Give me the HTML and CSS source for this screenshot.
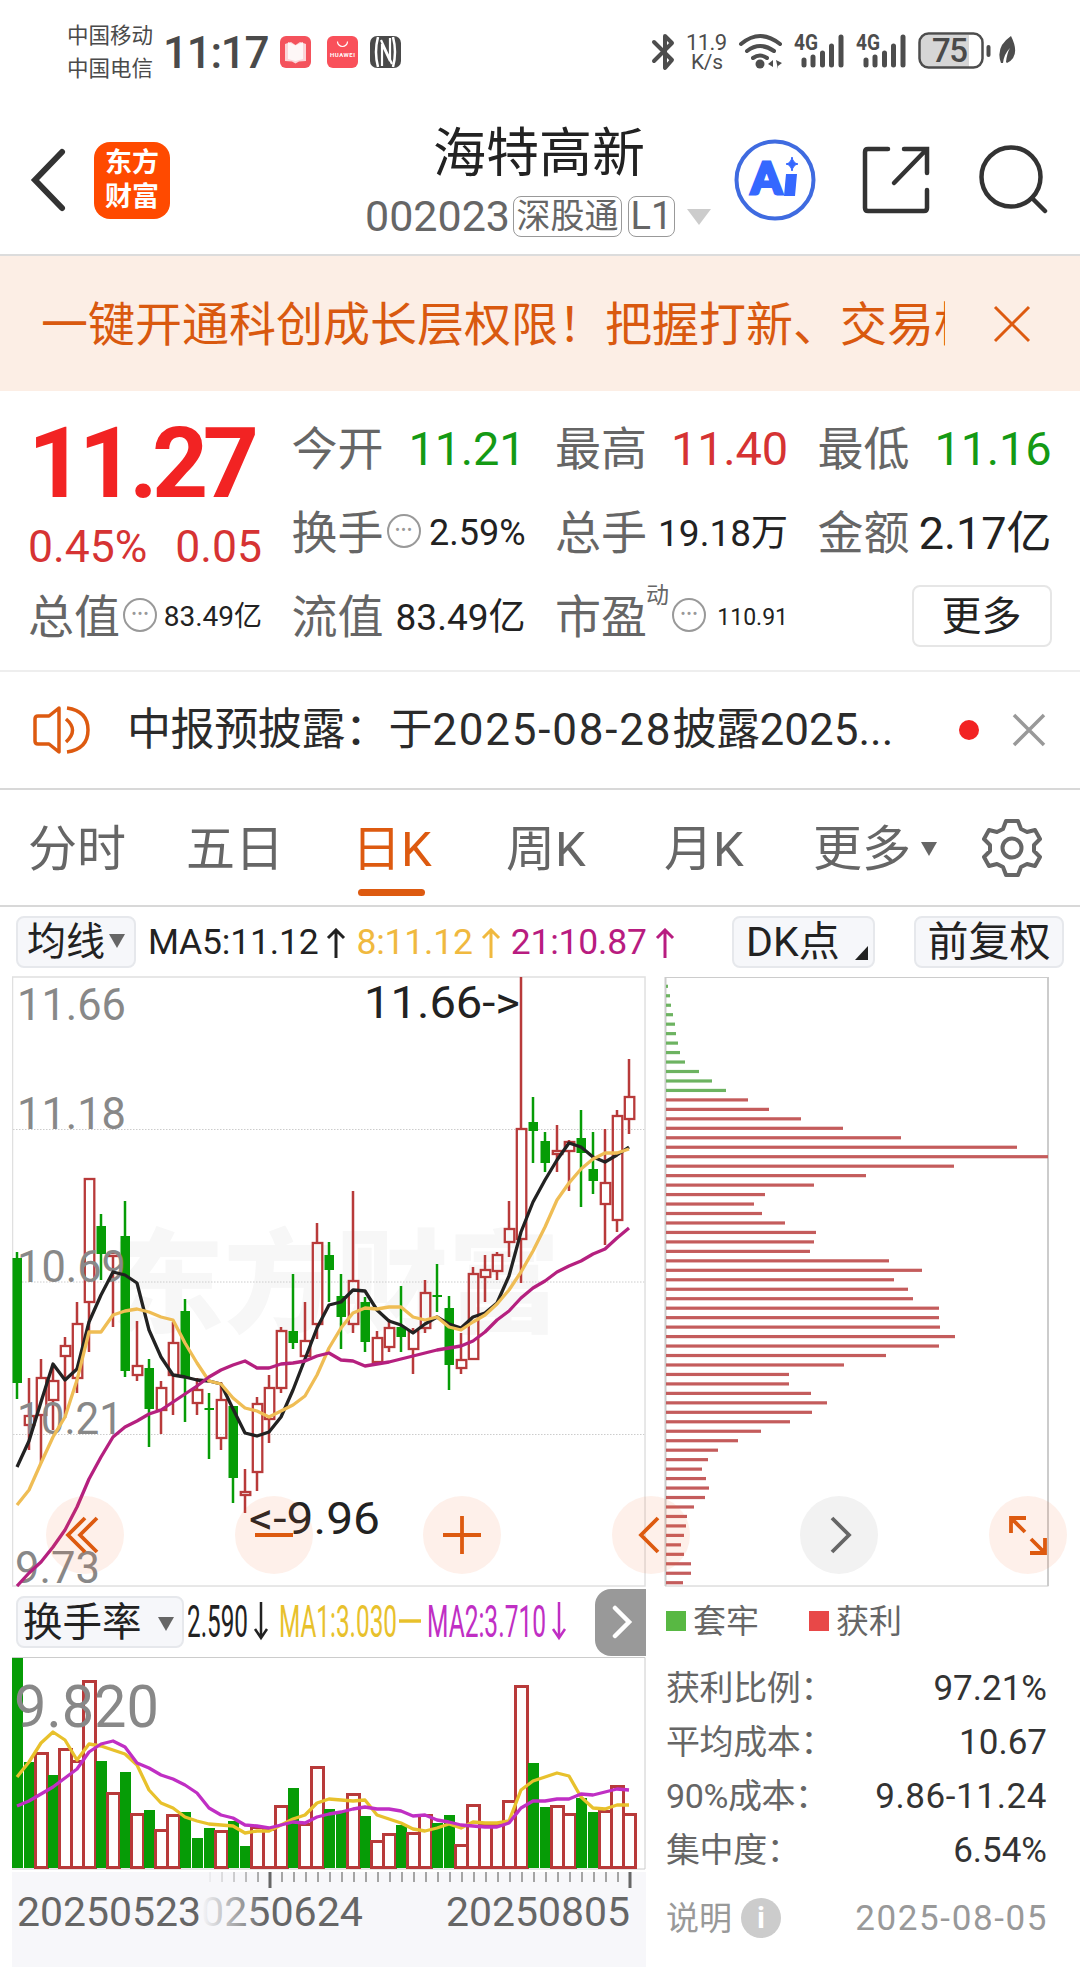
FILE: index.html
```html
<!DOCTYPE html>
<html lang="zh-CN">

<head>
    <meta charset="UTF-8">
    <meta name="viewport" content="width=device-width, initial-scale=1.0">
    <title>海特高新 002023</title>
    <link rel="stylesheet" href="styles.css">
</head>

<body>
    <!-- 系统状态栏 -->
    <div class="status">
        <div class="carrier">
            <div>中国移动</div>
            <div>中国电信</div>
        </div>
        <div class="clock">11:17</div>
        <svg class="tray" width="122" height="32" viewBox="0 0 122 32">
            <rect x="0" y="0" width="31" height="32" rx="6" fill="#f4525c" />
            <path d="M5 8l6-2 4.500 3 4.500-3 6 2v17l-7 .5-3.500 2-3.500-2-7-.5z" fill="#fbd5d8" />
            <path d="M8 6l7.500 3.500L23 6v17l-7.500 2L8 23z" fill="#fff" opacity=".8" />
            <rect x="47" y="0" width="31" height="32" rx="6" fill="#f9505a" />
            <path d="M57.500 5.500a5 5 0 0 0 10 0" fill="none" stroke="#fff" stroke-width="1.200" />
            <text x="50" y="21" font-size="6" font-weight="700" fill="#fff" textLength="25">HUAWEI</text>
            <rect x="90" y="0" width="31" height="32" rx="7" fill="#4a4a4a" />
            <path d="M98 1q-4 15 0 30M113 31q4-15 0-30" fill="none" stroke="#fff" stroke-width="2.500" />
            <path d="M102 30V8l8 17V2M101 4l11 24" fill="none" stroke="#fff" stroke-width="2.200" />
        </svg>
        <svg class="signals" width="368" height="42" viewBox="650 32 368 42">
            <g fill="none" stroke="#4d4d4d" stroke-width="4" stroke-linecap="round" stroke-linejoin="round">
                <path d="M655 43l18 18-7 8V37l7 7-18 18" />
                <path d="M742 45q19-16 39 0M748 52q13-10 27 0M754 59q7-5 14 0" />
            </g>
            <circle cx="761" cy="65" r="4.500" fill="#4d4d4d" />
            <path d="M774 61v7l-5-3zM777 61l6 3-4 3v3z" fill="#4d4d4d" />
            <g fill="#4d4d4d">
                <text x="687" y="51" font-size="22" textLength="41">11.9</text>
                <text x="692" y="70" font-size="21" textLength="32">K/s</text>
                <text x="795" y="51" font-size="22" font-weight="700" textLength="24" lengthAdjust="spacingAndGlyphs">4G</text>
                <text x="857" y="51" font-size="22" font-weight="700" textLength="24" lengthAdjust="spacingAndGlyphs">4G</text>
            </g>
            <path d="M805 61v5M814 58v8M823.500 54v12M832.500 47v19M842 38v28M867 61v5M876 58v8M885.500 54v12M894.500 47v19M904 38v28"
                stroke="#4d4d4d" stroke-width="5" stroke-linecap="round" />
            <path d="M928 36h42v32h-42q-7 0-7-8V44q0-8 7-8z" fill="#d6d6d6" />
            <rect x="920.500" y="34.500" width="63" height="34" rx="9" fill="none" stroke="#4d4d4d" stroke-width="2.500" />
            <path d="M989.500 48v8" stroke="#4d4d4d" stroke-width="4" stroke-linecap="round" />
            <text x="933" y="63" font-size="33" font-weight="500" fill="#4a4a4a" textLength="36">75</text>
            <path d="M1002 64q-6-16 10-27q10 20-4 27l-1-1q1-9 4-14q-6 6-7 15z" fill="#4d4d4d" />
        </svg>
    </div>

    <!-- 标题栏 -->
    <div class="header">
        <svg class="back" width="38" height="66" viewBox="0 0 38 66">
            <path d="M33 5L6 33l27 28" fill="none" stroke="#333" stroke-width="6" stroke-linecap="round" />
        </svg>
        <div class="applogo"><span>东方</span><span>财富</span></div>
        <div class="stock">
            <div class="name">海特高新</div>
            <div class="code">
                <span>002023</span>
                <i class="tag">深股通</i>
                <i class="tag">L1</i>
                <b class="arrow"></b>
            </div>
        </div>
        <svg class="ai" width="82" height="82" viewBox="0 0 82 82">
            <circle cx="41" cy="41" r="38.500" fill="none" stroke="#3f6be0" stroke-width="4" />
            <text x="17" y="55" font-family="Lato" font-size="44" font-weight="900" fill="#3568ff" stroke="#3568ff"
                stroke-width="3">A</text>
            <path d="M52 35h11l-2 22h-11z" fill="#3568ff" />
            <path d="M58 18q1 6 6 7q-5 1-6 7q-1-6-6-7q5-1 6-7z" fill="#3568ff" stroke="#3568ff" />
        </svg>
        <svg class="share" width="68" height="68" viewBox="0 0 68 68">
            <path d="M26 3H6q-3 0-3 3v56q0 3 3 3h56q3 0 3-3V44M42 3h23v24M64 4L32 37" fill="none" stroke="#333"
                stroke-width="4.500" stroke-linecap="round" />
        </svg>
        <svg class="search" width="70" height="70" viewBox="0 0 70 70">
            <circle cx="33" cy="32" r="29.500" fill="none" stroke="#333" stroke-width="4.500" />
            <path d="M54 53l13 13" stroke="#333" stroke-width="4.500" stroke-linecap="round" />
        </svg>
    </div>

    <!-- 广告条 -->
    <div class="banner">
        <div class="bannertext">一键开通科创成长层权限！把握打新、交易机会</div>
        <svg width="38" height="38" viewBox="0 0 38 38">
            <path d="M2 2l34 34M36 2L2 36" stroke="#dd5a10" stroke-width="3" />
        </svg>
    </div>

    <!-- 行情数据 -->
    <div class="quote">
        <div class="now">
            <div class="price">11.27</div>
            <div class="change"><span>0.45%</span><span>0.05</span></div>
        </div>
        <div class="item"><label>今开</label><span class="big green">11.21</span></div>
        <div class="item"><label>最高</label><span class="big red">11.40</span></div>
        <div class="item"><label>最低</label><span class="big green">11.16</span></div>
        <div class="item"><label>换手</label><i class="dots">•••</i><span class="v36">2.59%</span></div>
        <div class="item"><label>总手</label><span class="v37">19.18万</span></div>
        <div class="item"><label>金额</label><span class="v44">2.17亿</span></div>
        <div class="item"><label>总值</label><i class="dots">•••</i><span class="v28">83.49亿</span></div>
        <div class="item"><label>流值</label><span class="v37">83.49亿</span></div>
        <div class="item"><label>市盈<sup>动</sup></label><i class="dots">•••</i><span class="v23">110.91</span></div>
        <div class="item end"><div class="morebtn">更多</div></div>
    </div>

    <!-- 公告 -->
    <div class="notice">
        <svg width="60" height="50" viewBox="0 0 60 50">
            <g fill="none" stroke="#dd5a10" stroke-width="3.500" stroke-linejoin="round">
                <path d="M27 3L17 11H6q-3 0-3 3v22q0 3 3 3h11l10 8z" />
                <path d="M34 14q13 11 0 23M35 3q21 3 21 22t-21 22" />
            </g>
        </svg>
        <div class="noticetext">中报预披露：<span>于</span><span class="num">2025-08-28</span>披露<span class="num2">2025...</span></div>
        <div class="reddot"></div>
        <svg width="36" height="36" viewBox="0 0 36 36">
            <path d="M3 3l30 30M33 3L3 33" stroke="#999" stroke-width="3.500" />
        </svg>
    </div>

    <!-- 周期切换 -->
    <div class="tabs">
        <span>分时</span>
        <span>五日</span>
        <span class="active">日K</span>
        <span>周K</span>
        <span>月K</span>
        <span>更多<b class="tri"></b></span>
        <svg width="60" height="60" viewBox="0 0 60 60">
            <g fill="none" stroke="#666" stroke-width="4" stroke-linejoin="round">
                <path d="M24 3h12l3 8 6 3 8-2 5 9-6 6v6l6 6-5 9-8-2-6 3-3 8H24l-3-8-6-3-8 2-5-9 6-6v-6l-6-6 5-9 8 2 6-3z" />
                <circle cx="30" cy="30" r="9.500" />
            </g>
        </svg>
    </div>

    <!-- 均线工具栏 -->
    <div class="tools">
        <div class="chip ma">均线<b class="tri"></b></div>
        <div class="mavals">
            <span>MA5:11.12</span><svg width="20" height="30" viewBox="0 0 20 30"><path d="M10 30V2M2 10l8-8 8 8" /></svg>
            <span class="y">8:11.12</span><svg class="y" width="20" height="30" viewBox="0 0 20 30"><path d="M10 30V2M2 10l8-8 8 8" /></svg>
            <span class="m">21:10.87</span><svg class="m" width="20" height="30" viewBox="0 0 20 30"><path d="M10 30V2M2 10l8-8 8 8" /></svg>
        </div>
        <div class="chip dk">DK点<b class="corner"></b></div>
        <div class="chip fq">前复权</div>
    </div>

    <!-- 图表区 -->
    <div class="charts">
        <div class="left">
            <svg id="kline" width="634" height="611" viewBox="12 976 634 611"></svg>
            <div class="indicator">
                <div class="chip hs">换手率<b class="tri"></b></div>
                <svg class="turn" width="382" height="52" viewBox="188 1596 382 52">
                    <g font-size="45">
                        <text x="187" y="1637" fill="#222" textLength="61" lengthAdjust="spacingAndGlyphs">2.590</text>
                        <text x="279" y="1637" fill="#e8c12c" textLength="118" lengthAdjust="spacingAndGlyphs">MA1:3.030</text>
                        <text x="427" y="1637" fill="#c02fc4" textLength="119" lengthAdjust="spacingAndGlyphs">MA2:3.710</text>
                    </g>
                    <path d="M261 1602v35M255 1629l6 9 6-9" fill="none" stroke="#222" stroke-width="2.500" />
                    <path d="M399 1621h22" fill="none" stroke="#e8c12c" stroke-width="3.500" />
                    <path d="M559 1602v35M553 1629l6 9 6-9" fill="none" stroke="#c02fc4" stroke-width="2.500" />
                </svg>
                <div class="next">
                    <svg width="24" height="34" viewBox="0 0 24 34"><path d="M6 3l14 14L6 31" fill="none" stroke="#fff" stroke-width="4.500" stroke-linecap="round" /></svg>
                </div>
            </div>
            <svg id="volume" width="634" height="213" viewBox="12 1657 634 213"></svg>
            <svg id="axis" width="634" height="95" viewBox="12 1872 634 95"></svg>
        </div>
        <div class="right">
            <svg id="cost" width="386" height="611" viewBox="664 976 386 611"></svg>
            <div class="legend">
                <b class="sq g"></b><span>套牢</span>
                <b class="sq r"></b><span>获利</span>
            </div>
            <div class="row"><label>获利比例：</label><span>97.21%</span></div>
            <div class="row"><label>平均成本：</label><span>10.67</span></div>
            <div class="row"><label>90%成本：</label><span class="range">9.86-11.24</span></div>
            <div class="row"><label>集中度：</label><span>6.54%</span></div>
            <div class="foot"><label>说明</label><i>i</i><span>2025-08-05</span></div>
        </div>
        <!-- 悬浮操作按钮 -->
        <div class="floats">
            <div class="fbtn"><svg viewBox="0 0 78 78"><path d="M39 22L22 39l17 17M51 22L34 39l17 17" /></svg></div>
            <div class="fbtn"><svg viewBox="0 0 78 78"><path d="M20 39h38" /></svg></div>
            <div class="fbtn"><svg viewBox="0 0 78 78"><path d="M20 39h38M39 20v38" /></svg></div>
            <div class="fbtn"><svg viewBox="0 0 78 78"><path d="M46 22L29 39l17 17" /></svg></div>
            <div class="fbtn grey"><svg viewBox="0 0 78 78"><path d="M32 22l17 17-17 17" /></svg></div>
            <div class="fbtn"><svg viewBox="0 0 78 78"><path d="M37 22H22v15M22 22l14 14M41 57h15V42M56 57L42 43" /></svg></div>
        </div>
    </div>

    <script src="script.js"></script>
</body>

</html>
```
FILE: styles.css
```css
body {
    margin: 0;
    padding: 0;
    width: 1080px;
    background: #fff;
    color: #222;
    font-family: Roboto, "Noto Sans CJK SC", sans-serif;
    line-height: 1;
    overflow: hidden;
}

* {
    box-sizing: border-box;
}

i {
    font-style: normal;
}

svg {
    display: block;
    flex: none;
}

/* 状态栏 */
.status {
    height: 104px;
    padding: 0 63px 0 67px;
    display: flex;
    align-items: center;
    color: #4a4a4a;
}

.carrier {
    font-size: 21.5px;
    line-height: 33px;
    width: 96px;
}

.clock {
    font-size: 44px;
    font-weight: 500;
    width: 117px;
    padding-top: 2px;
    letter-spacing: -1.3px;
}

.signals {
    margin-left: auto;
}

/* 标题栏 */
.header {
    height: 152px;
    padding-top: 2px;
    display: flex;
    align-items: center;
    border-bottom: 2px solid #dcdcdc;
    position: relative;
}

.back {
    margin-left: 29px;
}

.applogo {
    width: 76px;
    height: 77px;
    margin-left: 27px;
    border-radius: 16px;
    background: #ff4a00;
    color: #fff;
    font-size: 27px;
    font-weight: 700;
    display: flex;
    flex-direction: column;
    align-items: center;
    justify-content: center;
    gap: 7px;
}

.stock {
    width: 346px;
    margin-left: 195px;
    margin-top: 6px;
}

.name {
    font-size: 53px;
    height: 54px;
    padding-left: 68px;
    margin-bottom: 13px;
    white-space: nowrap;
}

.code {
    display: flex;
    align-items: center;
    font-size: 43px;
    color: #666;
    white-space: nowrap;
}

.tag {
    width: 109px;
    height: 41px;
    margin-left: 3px;
    border: 1.5px solid #999;
    border-radius: 8px;
    font-size: 34px;
    line-height: 39px;
    text-align: center;
    flex: none;
}

.tag + .tag {
    width: 47px;
    font-size: 38px;
    line-height: 38px;
    margin-left: 6px;
}

.arrow {
    margin-left: 12px;
    border: 12px solid transparent;
    border-top: 16px solid #ccc;
    border-bottom: 0;
}

.ai {
    margin-left: 23px;
}

.share {
    margin-left: 46px;
}

.search {
    margin-left: 48px;
}

/* 广告条 */
.banner {
    height: 135px;
    padding: 0 49px 0 41px;
    background: #fceee5;
    color: #d9590f;
    display: flex;
    align-items: center;
    justify-content: space-between;
}

.bannertext {
    width: 904px;
    font-size: 47px;
    line-height: 60px;
    padding-top: 2px;
    white-space: nowrap;
    overflow: hidden;
}

/* 行情 */
.quote {
    height: 281px;
    padding: 15px 28px 0 28px;
    display: grid;
    grid-template-columns: 234px 234px 233px 234px;
    grid-template-rows: 84px 84px 84px;
    column-gap: 29.5px;
    border-bottom: 2px solid #eee;
}

.now {
    grid-row: span 2;
}

.price {
    margin-top: 9px;
    font-size: 98px;
    font-weight: 700;
    letter-spacing: -5.6px;
    color: #f22323;
}

.change {
    margin-top: 12px;
    display: flex;
    justify-content: space-between;
    font-size: 44.5px;
    color: #d63333;
}

.item {
    display: flex;
    align-items: center;
    justify-content: space-between;
    white-space: nowrap;
}

.item label {
    font-size: 46px;
    color: #666;
    position: relative;
    top: 1px;
}

.item sup {
    position: absolute;
    left: 91px;
    top: -10px;
    font-size: 23px;
    line-height: 1;
}

.dots {
    width: 34px;
    height: 34px;
    margin-left: 3px;
    margin-right: auto;
    margin-top: -3px;
    border: 2.5px solid #999;
    border-radius: 50%;
    font-size: 15px;
    line-height: 28px;
    letter-spacing: 1px;
    text-indent: 1px;
    text-align: center;
    color: #999;
}

.item label:has(sup) + .dots {
    margin-left: 25px;
}

.big {
    font-size: 47px;
    letter-spacing: -0.2px;
}

.green {
    color: #149a14;
}

.red {
    color: #d63333;
}

.v44 {
    font-size: 45px;
}

.v37 {
    font-size: 37px;
}

.v36 {
    font-size: 36px;
}

.v28 {
    font-size: 28px;
}

.v23 {
    font-size: 23px;
}

.v44,
.v37,
.v36,
.v28,
.v23 {
    padding-top: 2px;
}

.item.end {
    justify-content: flex-end;
}

.morebtn {
    width: 140px;
    height: 62px;
    border: 2px solid #e6e6e6;
    border-radius: 8px;
    font-size: 40px;
    line-height: 59px;
    text-align: center;
}

/* 公告 */
.notice {
    height: 118px;
    padding: 0 33px 0 32px;
    display: flex;
    align-items: center;
    border-bottom: 2px solid #d8d8d8;
    color: #2b2b2b;
}

.noticetext {
    width: 830px;
    margin-left: 35px;
    font-size: 44px;
    white-space: nowrap;
    letter-spacing: -0.4px;
}

.num {
    letter-spacing: 1.8px;
}

.num2 {
    letter-spacing: 0;
}

.reddot {
    width: 20px;
    height: 20px;
    margin-left: 2px;
    margin-right: auto;
    border-radius: 50%;
    background: #f22323;
}

/* 周期 */
.tabs {
    height: 117px;
    padding-left: 28px;
    display: grid;
    grid-template-columns: 158px 166px 154px 158px 149px 169px 60px;
    align-items: center;
    font-size: 49px;
    color: #666;
    white-space: nowrap;
    border-bottom: 2px solid #d8d8d8;
}

.tabs span {
    padding-top: 3px;
}

.tabs .active {
    position: relative;
    color: #dd5a10;
}

.active::after {
    content: "";
    position: absolute;
    left: 6px;
    bottom: -22px;
    width: 67px;
    height: 7px;
    border-radius: 4px;
    background: #dd5a10;
}

.tri {
    display: inline-block;
    border: 8px solid transparent;
    border-top: 14px solid #666;
    border-bottom: 0;
    vertical-align: middle;
}

.tabs .tri {
    margin: -8px 0 0 10px;
}

/* 工具栏 */
.tools {
    height: 69px;
    padding: 0 16px;
    display: flex;
    align-items: center;
}

.chip {
    height: 52px;
    border: 2px solid #e6e8ec;
    border-radius: 8px;
    background: #f6f7fa;
    font-size: 39px;
    line-height: 49px;
    white-space: nowrap;
    flex: none;
}

.ma {
    width: 120px;
    padding-left: 9px;
}

.ma .tri {
    margin: -6px 0 0 4px;
}

.mavals {
    display: flex;
    align-items: center;
    margin-left: 12px;
    width: 584px;
    padding-top: 2px;
    font-size: 35.5px;
    letter-spacing: -0.2px;
}

.mavals svg {
    margin: 0 10px 0 8px;
    fill: none;
    stroke: #222;
    stroke-width: 3;
}

.mavals .y {
    color: #f0b93f;
    stroke: #f0b93f;
}

span.y,
span.m {
    stroke: none;
}

.mavals .m {
    color: #b81c80;
    stroke: #b81c80;
}

.dk {
    position: relative;
    width: 143px;
    padding-left: 12px;
    font-size: 41px;
}

.corner {
    position: absolute;
    right: 5px;
    bottom: 6px;
    border-left: 13px solid transparent;
    border-bottom: 14px solid #222;
}

.fq {
    width: 150px;
    margin-left: 39px;
    text-align: center;
    font-size: 41px;
}

/* 图表 */
.charts {
    position: relative;
    display: flex;
    padding-left: 12px;
}

.left {
    width: 634px;
}

.indicator {
    height: 70px;
    display: flex;
    align-items: center;
}

.hs {
    width: 168px;
    margin-left: 4px;
    padding-left: 5px;
    font-size: 39.5px;
}

.hs .tri {
    margin: -4px 0 0 16px;
}

.turn {
    margin-left: 4px;
}

.next {
    width: 51px;
    height: 67px;
    margin-left: auto;
    border-radius: 16px 0 0 16px;
    background: #999;
    display: flex;
    align-items: center;
    justify-content: center;
}

#axis {
    margin-top: 2px;
    background: #f7f7fa;
}

.right {
    width: 386px;
    margin-left: 18px;
}

.legend {
    height: 68px;
    display: flex;
    align-items: center;
    font-size: 33px;
    color: #666;
}

.sq {
    width: 20px;
    height: 20px;
    margin: 0 7px 0 2px;
    background: #58b843;
}

.sq.r {
    margin-left: 50px;
    background: #e84848;
}

.row {
    height: 54px;
    padding: 0 3px 0 2px;
    display: flex;
    align-items: center;
    justify-content: space-between;
    font-size: 35px;
    color: #333;
}

.legend + .row {
    margin-top: 6px;
}

.row label {
    font-size: 34px;
    letter-spacing: -0.4px;
    color: #666;
}

.range {
    letter-spacing: 0.6px;
}

.foot {
    height: 60px;
    margin-top: 11px;
    padding: 0 2px;
    display: flex;
    align-items: center;
    font-size: 35px;
    color: #999;
}

.foot label {
    font-size: 33px;
}

.foot i {
    width: 40px;
    height: 40px;
    margin-left: 9px;
    border-radius: 50%;
    background: #ccc;
    color: #fff;
    font-size: 30px;
    font-weight: 700;
    line-height: 40px;
    text-align: center;
}

.foot span {
    margin-left: auto;
    letter-spacing: 1.6px;
}

/* 悬浮按钮 */
.floats {
    position: absolute;
    left: 46px;
    top: 520px;
    width: 1021px;
    display: flex;
    justify-content: space-between;
}

.fbtn {
    width: 78px;
    height: 78px;
    border-radius: 50%;
    background: rgba(250, 110, 50, 0.1);
}

.fbtn svg {
    fill: none;
    stroke: #dd5a10;
    stroke-width: 3.8;
}

.fbtn.grey {
    background: #f2f2f2;
}

.grey svg {
    stroke: #666;
}
```
FILE: script.js
```js
const RED = "#b83a3a";
const GREEN = "#069c06";
const STEP = 12;
const X0 = 17;

// K线：颜色, 最高, 实体上, 实体下, 最低
const candles = [
    ["g", 1252, 1258, 1383, 1399], ["r", 1378, 1415, 1425, 1450], ["r", 1359, 1377, 1415, 1463], ["r", 1365, 1380, 1400, 1430],
    ["r", 1337, 1345, 1356, 1418], ["r", 1302, 1323, 1378, 1393], ["r", 1178, 1178, 1302, 1352], ["g", 1214, 1226, 1254, 1280],
    ["r", 1252, 1252, 1256, 1327], ["g", 1201, 1236, 1371, 1377], ["r", 1321, 1365, 1375, 1381], ["g", 1359, 1368, 1409, 1447],
    ["r", 1381, 1387, 1410, 1434], ["r", 1322, 1342, 1375, 1415], ["g", 1299, 1311, 1377, 1422], ["r", 1378, 1389, 1403, 1415],
    ["g", 1393, 1408, 1410, 1459], ["r", 1382, 1399, 1438, 1450], ["g", 1406, 1406, 1478, 1503], ["r", 1469, 1491, 1495, 1513],
    ["r", 1397, 1403, 1472, 1491], ["r", 1375, 1387, 1419, 1443], ["r", 1327, 1330, 1388, 1393], ["g", 1274, 1331, 1343, 1349],
    ["r", 1302, 1340, 1356, 1356], ["r", 1223, 1242, 1324, 1339], ["g", 1242, 1255, 1270, 1302], ["g", 1274, 1296, 1317, 1349],
    ["r", 1191, 1280, 1324, 1333], ["g", 1297, 1302, 1342, 1352], ["r", 1331, 1337, 1362, 1362], ["r", 1319, 1327, 1347, 1352],
    ["g", 1286, 1327, 1337, 1352], ["r", 1328, 1330, 1349, 1374], ["r", 1280, 1292, 1328, 1333], ["g", 1264, 1295, 1297, 1312],
    ["g", 1296, 1308, 1365, 1390], ["r", 1333, 1359, 1368, 1374], ["r", 1267, 1273, 1359, 1359], ["r", 1255, 1269, 1277, 1302],
    ["r", 1252, 1254, 1271, 1280], ["r", 1201, 1228, 1242, 1257], ["r", 977, 1128, 1239, 1283], ["g", 1097, 1122, 1131, 1163],
    ["g", 1132, 1141, 1163, 1172], ["r", 1125, 1150, 1154, 1172], ["r", 1140, 1141, 1151, 1191], ["g", 1110, 1138, 1153, 1207],
    ["g", 1132, 1169, 1181, 1194], ["r", 1129, 1182, 1204, 1245], ["r", 1110, 1115, 1220, 1232], ["r", 1059, 1096, 1119, 1134]
];

const ma5 = [1467, 1441, 1402, 1364, 1380, 1369, 1322, 1295, 1272, 1275, 1283, 1330, 1357, 1375, 1377, 1380, 1381, 1384, 1409, 1433, 1436, 1432, 1417, 1390, 1359, 1328, 1305, 1302, 1290, 1291, 1310, 1321, 1325, 1333, 1324, 1317, 1324, 1328, 1317, 1313, 1303, 1276, 1232, 1202, 1180, 1160, 1143, 1147, 1157, 1162, 1155, 1147];
const ma8 = [1505, 1490, 1463, 1437, 1417, 1380, 1332, 1332, 1315, 1311, 1309, 1312, 1317, 1320, 1343, 1363, 1381, 1384, 1398, 1408, 1411, 1417, 1411, 1405, 1396, 1375, 1348, 1328, 1313, 1308, 1309, 1307, 1307, 1317, 1320, 1317, 1327, 1330, 1322, 1315, 1304, 1290, 1272, 1251, 1227, 1200, 1183, 1169, 1159, 1153, 1153, 1149];
const ma21 = [1586, 1573, 1562, 1547, 1530, 1507, 1479, 1457, 1437, 1427, 1421, 1414, 1410, 1402, 1394, 1386, 1377, 1370, 1365, 1361, 1368, 1368, 1364, 1363, 1361, 1356, 1353, 1360, 1361, 1366, 1364, 1362, 1359, 1356, 1353, 1350, 1348, 1346, 1341, 1332, 1320, 1311, 1298, 1288, 1281, 1272, 1266, 1261, 1254, 1249, 1238, 1228];

// 换手率柱
const volColor = "ggrgrrrgrgrgrrgggrggrrrgrrggrgrrgrrggrrrrrrggrrggrrr".split("");
const vols = [1658, 1762, 1752, 1775, 1748, 1760, 1680, 1761, 1792, 1772, 1813, 1810, 1829, 1814, 1812, 1838, 1828, 1830, 1821, 1846, 1826, 1828, 1805, 1788, 1823, 1766, 1809, 1811, 1793, 1816, 1840, 1833, 1825, 1832, 1814, 1823, 1815, 1844, 1804, 1823, 1823, 1800, 1685, 1763, 1807, 1805, 1813, 1798, 1812, 1810, 1785, 1813];
const vma1 = [1777, 1762, 1743, 1732, 1740, 1760, 1744, 1746, 1750, 1754, 1765, 1790, 1803, 1808, 1817, 1821, 1824, 1825, 1826, 1833, 1831, 1831, 1825, 1819, 1815, 1803, 1799, 1800, 1801, 1800, 1815, 1819, 1823, 1829, 1831, 1828, 1824, 1828, 1822, 1823, 1823, 1821, 1790, 1781, 1777, 1773, 1776, 1797, 1808, 1809, 1805, 1805];
const vma2 = [1806, 1801, 1794, 1787, 1778, 1769, 1752, 1744, 1741, 1747, 1763, 1768, 1775, 1779, 1785, 1793, 1808, 1815, 1818, 1825, 1826, 1828, 1825, 1822, 1823, 1817, 1814, 1812, 1809, 1807, 1809, 1809, 1811, 1816, 1815, 1820, 1822, 1825, 1826, 1827, 1827, 1823, 1808, 1801, 1801, 1799, 1799, 1794, 1795, 1792, 1789, 1790];

// 筹码分布
const chips = [2, 4, 5, 7, 9, 10, 12, 14, 19, 33, 46, 60, 82, 103, 135, 177, 235, 351, 382, 288, 200, 148, 99, 88, 96, 119, 150, 148, 144, 223, 256, 228, 242, 247, 273, 273, 274, 289, 273, 220, 178, 123, 123, 145, 161, 146, 124, 95, 72, 52, 42, 36, 40, 43, 39, 28, 21, 20, 18, 15, 18, 25, 25, 17];

function px(i) {
    return X0 + i * STEP;
}

function line(data, color) {
    const pts = data.map((y, i) => `${px(i)},${y}`).join(" ");
    return `<polyline points="${pts}" fill="none" stroke="${color}" stroke-width="3.300" stroke-linejoin="round"/>`;
}

function label(x, y, w, size, color, text) {
    return `<text x="${x}" y="${y}" font-size="${size}" fill="${color}" textLength="${w}" lengthAdjust="spacingAndGlyphs">${text}</text>`;
}

function drawKline() {
    let s = `<text x="112" y="1324" font-family="Noto Sans CJK SC" font-size="112" font-weight="900" fill="#f7f7f7">东方财富</text>`;
    [1129.5, 1282, 1434.5].forEach(y => {
        s += `<path d="M13 ${y}H645" stroke="#ccc" stroke-width="1" stroke-dasharray="1.500 1.500"/>`;
    });
    s += `<rect x="12.500" y="977" width="632.500" height="609" fill="none" stroke="#e0e0e0" stroke-width="1.500"/>`;
    candles.forEach((c, i) => {
        const x = px(i);
        if (c[0] === "g") {
            s += `<path d="M${x} ${c[1]}V${c[4]}" stroke="${GREEN}" stroke-width="2.500"/>`;
            s += `<rect x="${x - 4.5}" y="${c[2]}" width="9.500" height="${c[3] - c[2]}" fill="${GREEN}"/>`;
        } else {
            s += `<path d="M${x} ${c[1]}V${c[2]}M${x} ${c[3]}V${c[4]}" stroke="${RED}" stroke-width="2.500"/>`;
            s += `<rect x="${x - 4.2}" y="${c[2] + 1}" width="9.500" height="${c[3] - c[2] - 1}" fill="none" stroke="${RED}" stroke-width="2.300"/>`;
        }
    });
    s += label(17, 1020, 109, 45, "#888", "11.66");
    s += label(17, 1129, 109, 45, "#888", "11.18");
    s += label(17, 1282, 109, 45, "#888", "10.69");
    s += label(17, 1434, 106, 45, "#888", "10.21");
    s += label(15, 1583, 85, 45, "#888", "9.73");
    s += line(ma5, "#222") + line(ma8, "#efbd55") + line(ma21, "#b5207f");
    s += label(364, 1018, 156, 45, "#222", "11.66-&gt;");
    s += label(249, 1534, 131, 45, "#222", "&lt;-9.96");
    document.getElementById("kline").innerHTML = s;
}

function drawVolume() {
    let s = `<path d="M12 1657.500H645V1869H12" fill="none" stroke="#ccc" stroke-width="1"/>`;
    vols.forEach((y, i) => {
        const x = px(i);
        if (volColor[i] === "g") {
            s += `<rect x="${x - 5}" y="${y}" width="11" height="${1868 - y}" fill="${GREEN}"/>`;
        } else {
            s += `<rect x="${x - 5.5}" y="${y + 1.5}" width="12" height="${1866 - y}" fill="#fff" stroke="${RED}" stroke-width="3"/>`;
        }
    });
    s += label(14, 1727, 145, 60, "#888", "9.820");
    s += line(vma1, "#e8c12c") + line(vma2, "#c02fc4");
    document.getElementById("volume").innerHTML = s;
}

function drawAxis() {
    let s = `<defs><linearGradient id="fade"><stop offset="0" stop-color="#f7f7fa"/><stop offset="1" stop-color="#f7f7fa" stop-opacity="0"/></linearGradient></defs>`;
    for (let x = 210; x <= 618; x += STEP) {
        s += `<path d="M${x} 1872v10" stroke="#888" stroke-width="1.500"/>`;
    }
    s += `<path d="M270 1872v16M630 1872v16" stroke="#666" stroke-width="3"/>`;
    s += label(178, 1926, 185, 41, "#666", "20250624");
    s += label(446, 1926, 184, 41, "#666", "20250805");
    s += `<rect x="12" y="1872" width="190" height="95" fill="#f7f7fa"/><rect x="201.500" y="1872" width="63" height="95" fill="url(#fade)"/>`;
    s += label(17, 1926, 184, 41, "#666", "20250523");
    document.getElementById("axis").innerHTML = s;
}

function drawCost() {
    let s = `<path d="M665 977.500H1048.500M665 1586H1048.500" stroke="#ccc" stroke-width="1"/>`;
    s += `<path d="M665.500 977V1586M1048 977V1586" stroke="#ccc" stroke-width="2"/>`;
    chips.forEach((w, i) => {
        const y = 984.7 + i * 9.467;
        s += `<rect x="666" y="${y}" width="${w}" height="3.200" fill="${i < 12 ? "#6db361" : "#c45c5c"}"/>`;
    });
    document.getElementById("cost").innerHTML = s;
}

drawKline();
drawVolume();
drawAxis();
drawCost();
```
